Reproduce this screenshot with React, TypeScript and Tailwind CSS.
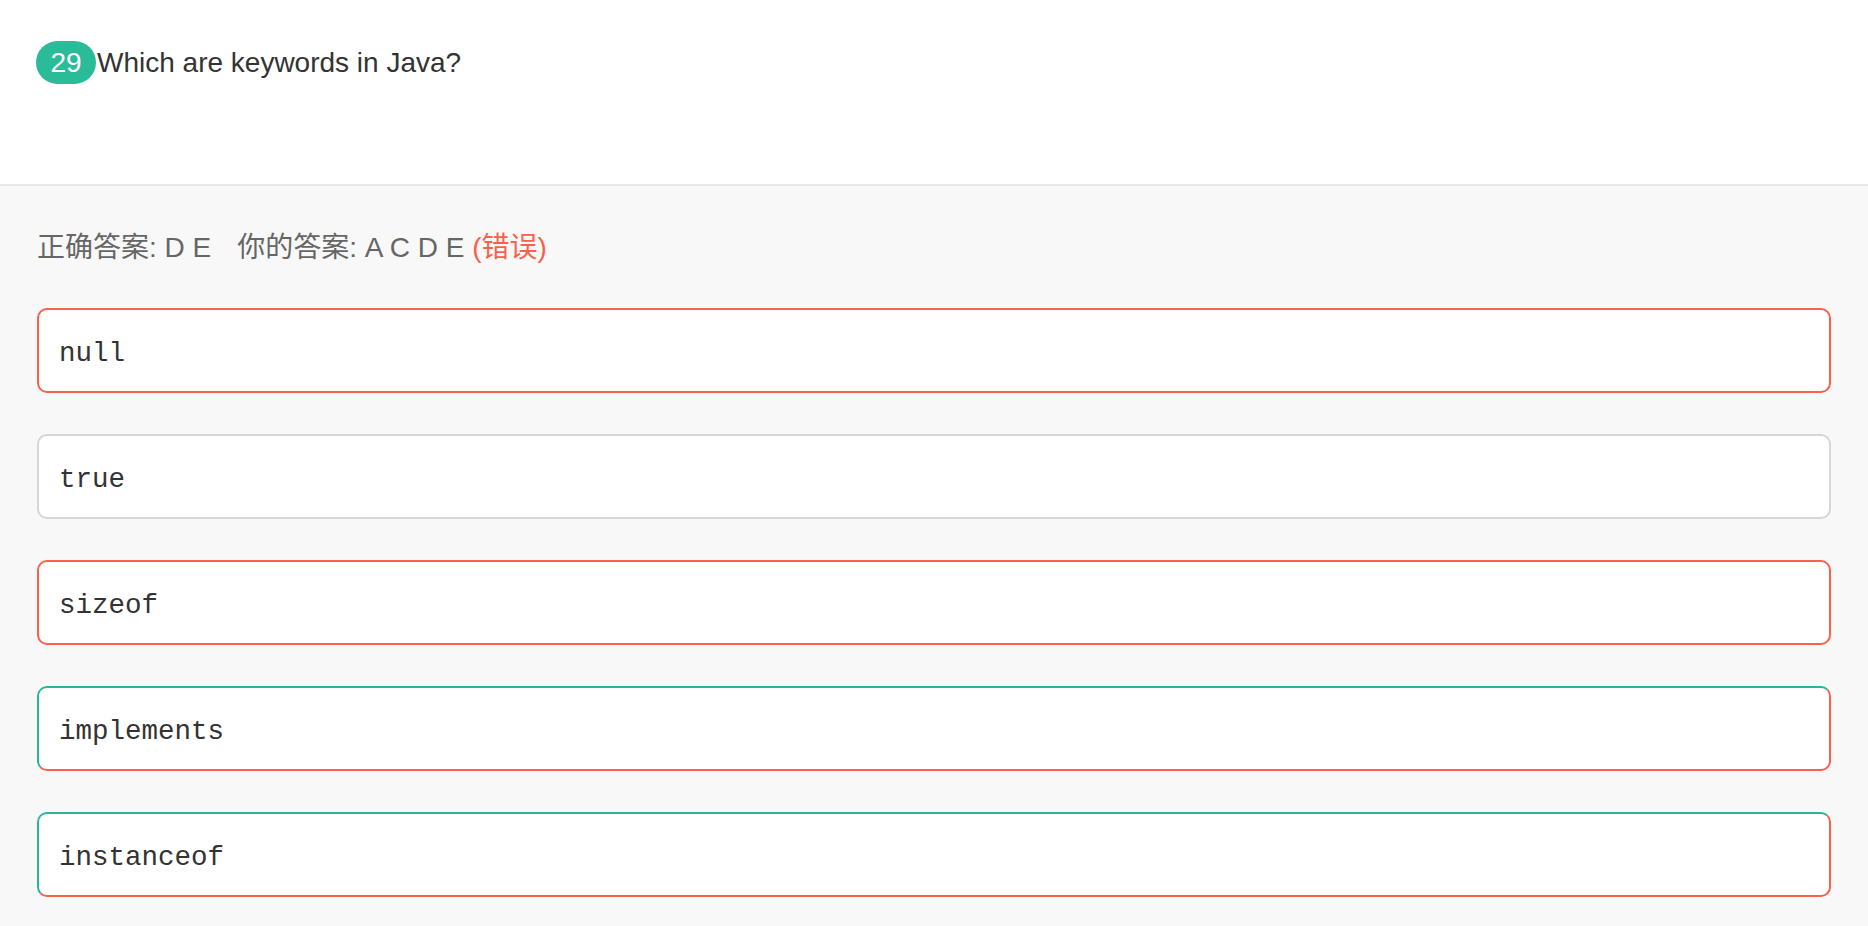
import React from "react";

type Opt = { text: string; cls: string };

const options: Opt[] = [
  { text: "null", cls: "border-[#f9614d]" },
  { text: "true", cls: "border-[#d6d6d6]" },
  { text: "sizeof", cls: "border-[#f9614d]" },
  {
    text: "implements",
    cls: "border-t-[#27b797] border-l-[#27b797] border-r-[#f9614d] border-b-[#f9614d]",
  },
  {
    text: "instanceof",
    cls: "border-t-[#27b797] border-l-[#27b797] border-r-[#f9614d] border-b-[#f9614d]",
  },
];

export default function App() {
  return (
    <div
      className="min-h-[926px] w-full bg-[#f8f8f8]"
      style={{ fontFamily: '"Liberation Sans", Arial, "Noto Sans CJK SC", sans-serif' }}
    >
      <div className="h-[186px] bg-white border-b-2 border-[#e8e8e8] px-[36px] pt-[41px]">
        <div className="flex items-center">
          <span className="flex h-[43px] w-[60px] items-center justify-center rounded-[22px] bg-[#2abb99] text-[28px] leading-none text-white">
            29
          </span>
          <span className="ml-px text-[28px] leading-[43px] text-[#333333]">
            Which are keywords in Java?
          </span>
        </div>
      </div>
      <div className="px-[37px] pt-[42px] pb-[28px]">
        <div className="text-[28px] leading-[40px] text-[#666666]">
          <span>正确答案: D E</span>
          <span className="ml-[26px]">你的答案: A C D E </span>
          <span className="text-[#f9614d]">(错误)</span>
        </div>
        <div className="mt-[40px] flex flex-col gap-[41px]">
          {options.map((o) => (
            <div
              key={o.text}
              className={`flex h-[85px] items-center rounded-[10px] border-2 bg-white px-[20px] pt-[6px] ${o.cls}`}
            >
              <span
                className="text-[27.5px] text-[#333333]"
                style={{ fontFamily: '"Liberation Mono", "Courier New", monospace' }}
              >
                {o.text}
              </span>
            </div>
          ))}
        </div>
      </div>
    </div>
  );
}
